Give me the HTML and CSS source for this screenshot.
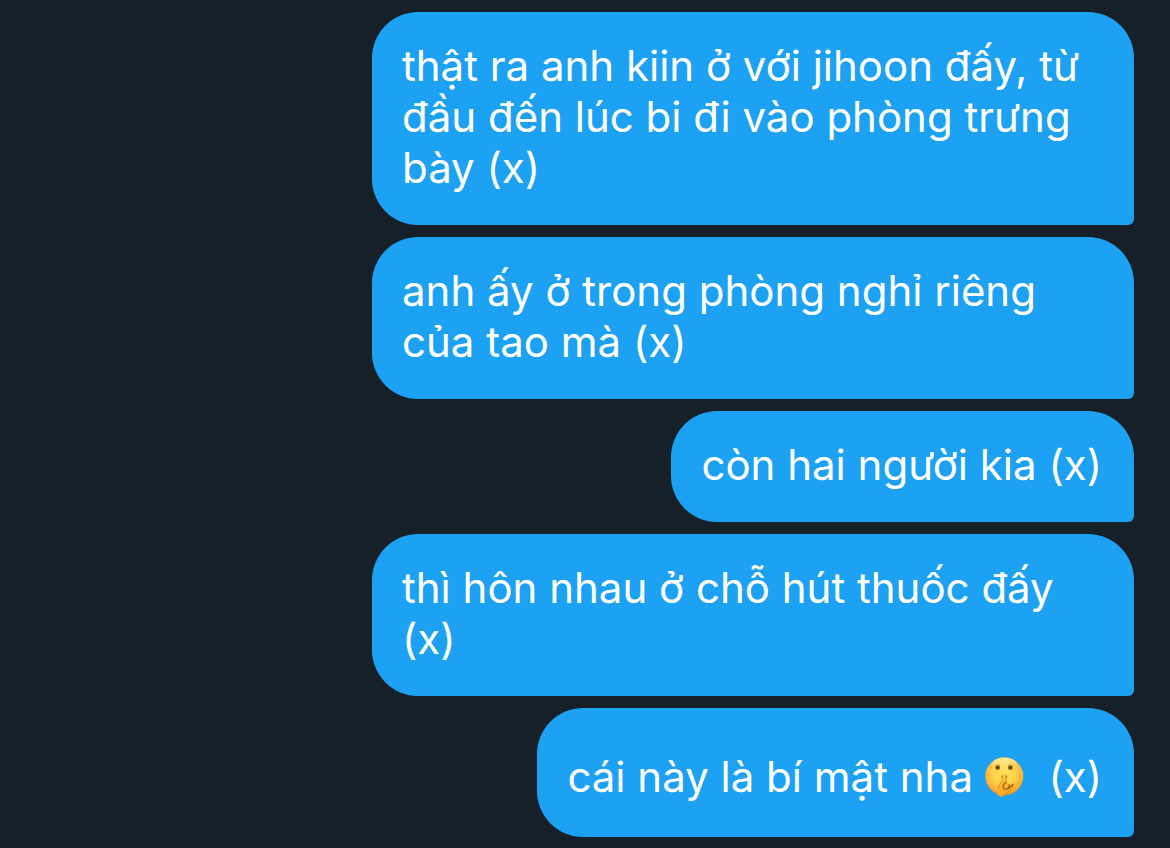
FILE: index.html
```html
<!DOCTYPE html>
<html lang="vi">

<head>
  <meta charset="UTF-8">
  <title>Messages</title>
  <link rel="stylesheet" href="styles.css">
</head>

<body>
  <main class="chat">
    <p class="bubble">thật ra anh kiin ở với jihoon đấy, từ đầu đến lúc bi đi vào phòng trưng bày (x)</p>
    <p class="bubble">anh ấy ở trong phòng nghỉ riêng của tao mà (x)</p>
    <p class="bubble">còn hai người kia (x)</p>
    <p class="bubble">thì hôn nhau ở chỗ hút thuốc đấy (x)</p>
    <p class="bubble tall">cái này là bí mật nha
      <svg class="emoji" viewBox="0 0 120 120" role="img" aria-label="shushing face">
        <defs>
          <radialGradient id="face" cx="50%" cy="40%" r="60%">
            <stop offset="0" stop-color="#ffe25a"/>
            <stop offset="0.5" stop-color="#ffd24a"/>
            <stop offset="0.82" stop-color="#fcb436"/>
            <stop offset="1" stop-color="#ee8f1e"/>
          </radialGradient>
          <linearGradient id="shine" x1="0" y1="0" x2="0" y2="1">
            <stop offset="0" stop-color="#fff6c0" stop-opacity="0.8"/>
            <stop offset="1" stop-color="#ffe680" stop-opacity="0"/>
          </linearGradient>
          <linearGradient id="hand" x1="0" y1="0" x2="0" y2="1">
            <stop offset="0" stop-color="#ffcb45"/>
            <stop offset="1" stop-color="#f5a524"/>
          </linearGradient>
        </defs>
        <circle cx="58" cy="58" r="57" fill="url(#face)"/>
        <ellipse cx="58" cy="22" rx="38" ry="19" fill="url(#shine)"/>
        <!-- brows and eyes -->
        <path d="M31 28q6-7 14-3M70 25q8-4 14 3" fill="none" stroke="#b98022" stroke-width="3"/>
        <ellipse cx="38" cy="32" rx="7" ry="6" fill="#65450a"/>
        <ellipse cx="76" cy="32" rx="7" ry="6" fill="#65450a"/>
        <!-- lips -->
        <path d="M49 60q4-9 7-4h4q4-5 7 4q-4 5-9 5t-9-5z" fill="#9a5a16"/>
        <!-- hand with raised finger -->
        <path d="M53 52q5-5 9 0l2 23q9-1 10 10l9-7q6-1 4 6q-5 11-14 20q-8 9-17 13q-11 5-17-3q-3-7-1-20q2-14 12-20z" fill="url(#hand)"/>
        <path d="M52 55l-1 19q-11 8-12 24M63 56l1 18M86 82q-5 12-14 21q-9 9-18 13" fill="none" stroke="#cf7d1b" stroke-width="2"/>
        <path d="M64 76q-11 5-9 17q6 6 13 1q6-5 5-10M70 95q8-5 13-13" fill="none" stroke="#a9600f" stroke-width="4" stroke-linecap="round"/>
      </svg>
      &nbsp;(x)</p>
  </main>
</body>

</html>
```

FILE: styles.css
```css
* {
  margin: 0;
  padding: 0;
  box-sizing: border-box;
}

body {
  background-color: #162029;
  font-family: Inter, "Noto Sans", sans-serif;
}

.chat {
  display: flex;
  flex-direction: column;
  align-items: flex-end;
  gap: 12px;
  padding: 12px 36px 11px;
}

.bubble {
  max-width: 762px;
  padding: 28px 32px 32px 30px;
  border-radius: 46px 46px 6px 46px;
  background-color: #1da1f2;
  color: white;
  font-size: 42px;
  line-height: 51px;
}

.tall {
  padding-top: 43px;
  padding-bottom: 35px;
}

.emoji {
  width: 40px;
  height: 40px;
  vertical-align: -5px;
}
```
